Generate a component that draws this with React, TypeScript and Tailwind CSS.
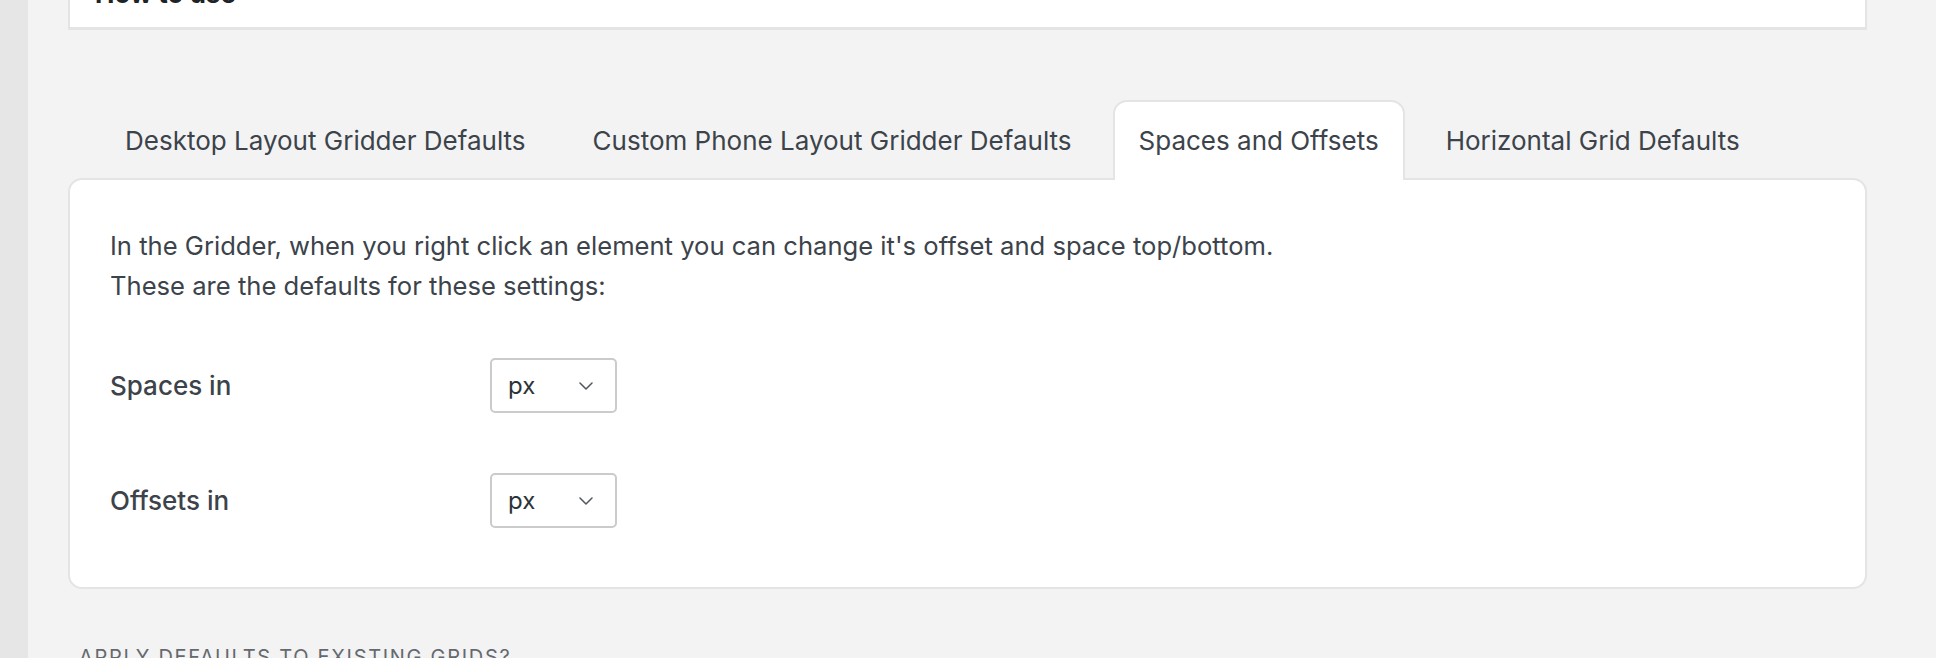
import React from "react";

const FONT = { fontFamily: "Inter, 'Noto Sans', 'Liberation Sans', sans-serif" };

const tabs = [
  "Desktop Layout Gridder Defaults",
  "Custom Phone Layout Gridder Defaults",
  "Spaces and Offsets",
  "Horizontal Grid Defaults",
];

function Chevron() {
  return (
    <svg width="14" height="8" viewBox="0 0 14 8" fill="none">
      <polyline
        points="1,1 7,7 13,1"
        stroke="#50575e"
        strokeWidth="1.5"
        strokeLinecap="round"
        strokeLinejoin="round"
      />
    </svg>
  );
}

function UnitSelect({ value }: { value: string }) {
  return (
    <div className="flex h-[55px] w-[127px] items-center justify-between rounded-[5px] border-2 border-[#cbcbcb] bg-white pl-[16px] pr-[22px]">
      <span className="text-[24px] leading-none text-[#2c3338]">{value}</span>
      <Chevron />
    </div>
  );
}

function SettingRow({ label }: { label: string }) {
  return (
    <div className="flex items-center py-[30px]">
      <div className="w-[380px] text-[26px] font-medium text-[#3c434a]">{label}</div>
      <UnitSelect value="px" />
    </div>
  );
}

export default function App() {
  const active = 2;
  return (
    <div className="flex h-[658px] overflow-hidden bg-[#f3f3f3]" style={FONT}>
      {/* admin menu edge */}
      <div className="w-[28px] shrink-0 bg-[#e6e6e6]" />

      <div className="flex flex-1 flex-col pl-[40px] pr-[69px]">
        {/* previous section card */}
        <div className="-mt-[19px] border-x-2 border-b-[3px] border-[#e4e4e4] bg-white pb-[20px] pl-[25px]">
          <div className="text-[26px] font-bold leading-[26px] text-[#1d2327]">How to use</div>
        </div>

        {/* tab bar */}
        <div className="relative z-10 mt-[70px] -mb-[2px] flex gap-[15px] pl-[31px]">
          {tabs.map((t, i) => (
            <div
              key={t}
              className={
                i === active
                  ? "flex h-[80px] items-center rounded-t-[14px] border-2 border-b-0 border-[#e4e4e4] bg-white px-[24px] pb-[2px] text-[26px] text-[#3c434a]"
                  : "flex h-[80px] items-center border-2 border-b-0 border-transparent px-[24px] pb-[2px] text-[26px] text-[#3c434a]"
              }
            >
              {t}
            </div>
          ))}
        </div>

        {/* settings panel */}
        <div className="rounded-[14px] border-2 border-[#e4e4e4] bg-white pb-[29px] pl-[40px] pt-[46px]">
          <p className="text-[25.6px] leading-[40px] text-[#3c434a]">
            In the Gridder, when you right click an element you can change it's offset and space top/bottom.
            <br />
            These are the defaults for these settings:
          </p>
          <div className="mt-[22px]">
            <SettingRow label="Spaces in" />
            <SettingRow label="Offsets in" />
          </div>
        </div>

        <div className="mt-[56px] pl-[11px] text-[20px] uppercase leading-[24px] tracking-[1.7px] text-[#646970]">
          Apply defaults to existing grids?
        </div>
      </div>
    </div>
  );
}
